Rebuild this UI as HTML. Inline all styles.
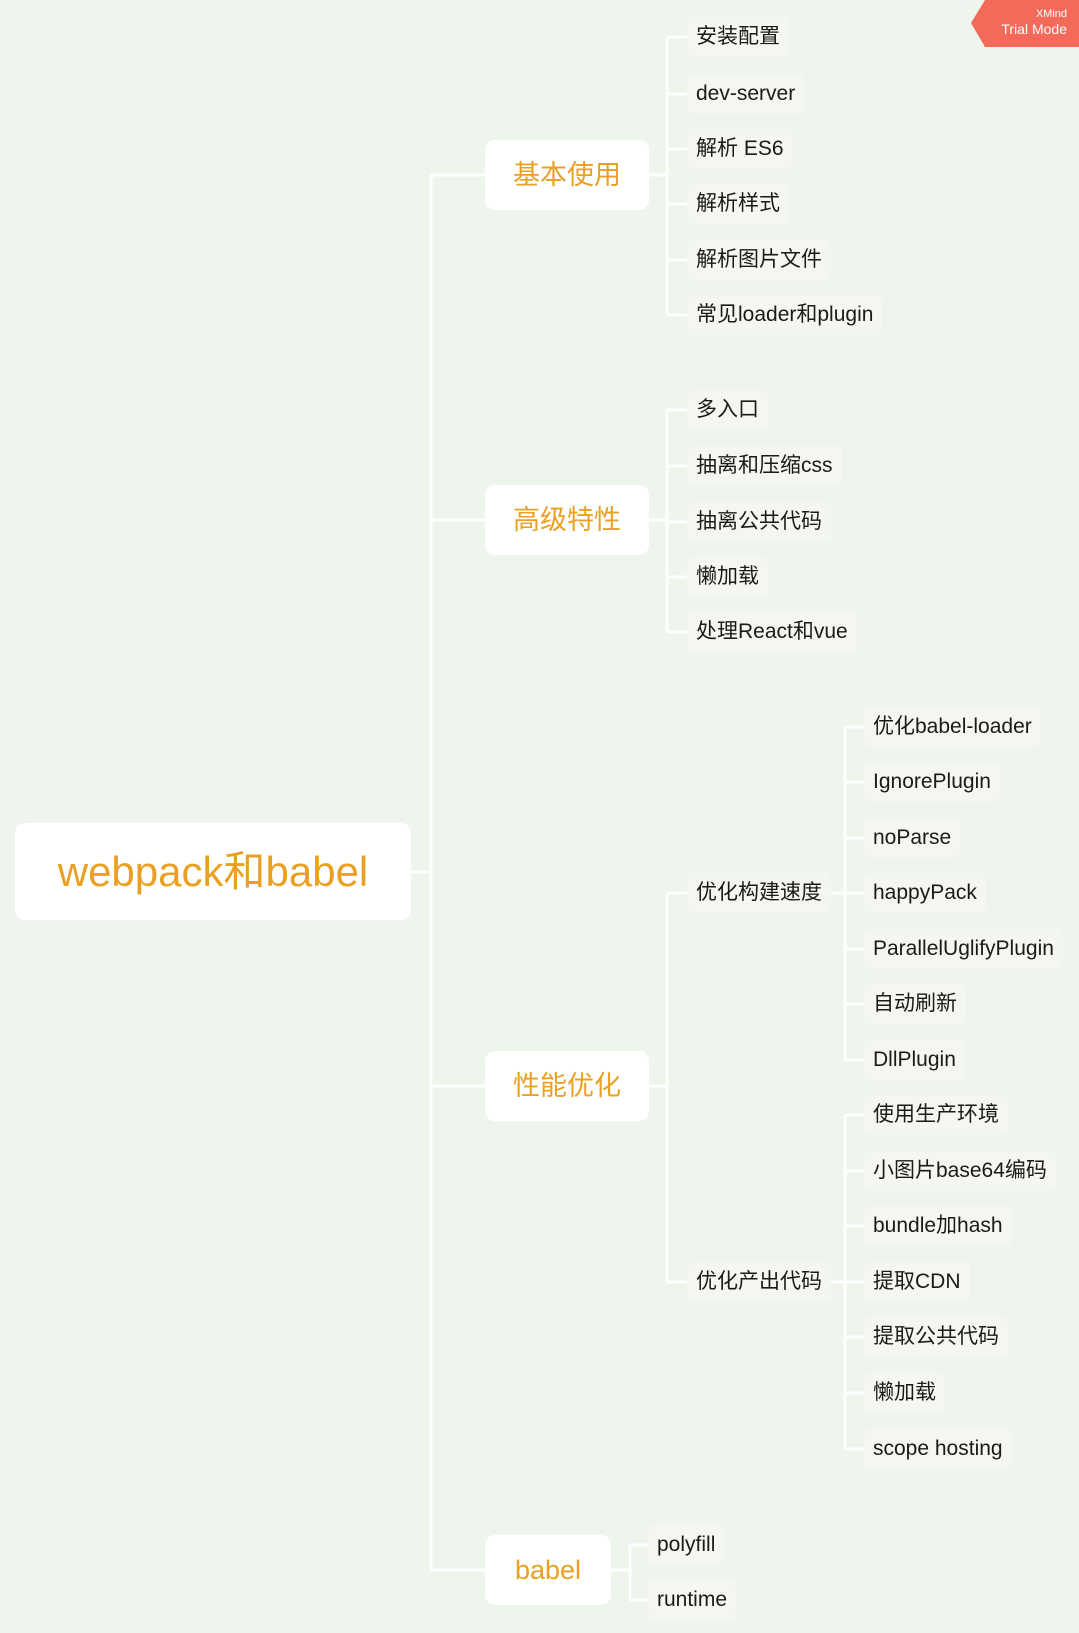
<!DOCTYPE html>
<html><head><meta charset="utf-8"><style>
body{margin:0;width:1079px;height:1633px;background:#eef5ec;position:relative;overflow:hidden;font-family:"Liberation Sans","Noto Sans CJK SC",sans-serif}
.n{position:absolute;height:40px;line-height:40px;padding:0 9px;background:#f4f7ef;border-radius:6px;font-size:21px;color:#1a1a1a;white-space:nowrap;margin-top:2px}
.l1{position:absolute;background:#fff;border-radius:10px;color:#e9a023;font-size:27px;text-align:center;height:70px;line-height:70px}
svg{position:absolute;left:0;top:0}
</style></head><body>
<svg width="1079" height="1633" fill="none" stroke="#fff" stroke-width="3">
<path d="M411 872H431M431 175V1570M431 175H485M431 520H485M431 1086H485M431 1570H485"/>
<path d="M649 175H667M667 37V315M667 37H687M667 94H687M667 149H687M667 204H687M667 260H687M667 315H687"/>
<path d="M649 520H667M667 410V632M667 410H687M667 466H687M667 522H687M667 577H687M667 632H687"/>
<path d="M649 1086H667M667 893V1282M667 893H687M667 1282H687"/>
<path d="M827 893H845M845 727V1060M845 727H864M845 782H864M845 838H864M845 893H864M845 949H864M845 1004H864M845 1060H864"/>
<path d="M827 1282H845M845 1115V1449M845 1115H864M845 1171H864M845 1226H864M845 1282H864M845 1337H864M845 1393H864M845 1449H864"/>
<path d="M611 1570H630M630 1545V1600M630 1545H648M630 1600H648"/>
</svg>
<div style="position:absolute;left:15px;top:823px;width:396px;height:97px;background:#fff;border-radius:10px;color:#e9a023;font-size:42px;line-height:97px;text-align:center">webpack和babel</div>
<div class="l1" style="left:485px;top:140px;width:164px">基本使用</div>
<div class="l1" style="left:485px;top:485px;width:164px">高级特性</div>
<div class="l1" style="left:485px;top:1051px;width:164px">性能优化</div>
<div class="l1" style="left:485px;top:1535px;width:126px">babel</div>

<div class="n" style="left:687px;top:15px">安装配置</div>
<div class="n" style="left:687px;top:72px">dev-server</div>
<div class="n" style="left:687px;top:127px">解析 ES6</div>
<div class="n" style="left:687px;top:182px">解析样式</div>
<div class="n" style="left:687px;top:238px">解析图片文件</div>
<div class="n" style="left:687px;top:293px">常见loader和plugin</div>

<div class="n" style="left:687px;top:388px">多入口</div>
<div class="n" style="left:687px;top:444px">抽离和压缩css</div>
<div class="n" style="left:687px;top:500px">抽离公共代码</div>
<div class="n" style="left:687px;top:555px">懒加载</div>
<div class="n" style="left:687px;top:610px">处理React和vue</div>

<div class="n" style="left:687px;top:871px">优化构建速度</div>
<div class="n" style="left:687px;top:1260px">优化产出代码</div>

<div class="n" style="left:864px;top:705px">优化babel-loader</div>
<div class="n" style="left:864px;top:760px">IgnorePlugin</div>
<div class="n" style="left:864px;top:816px">noParse</div>
<div class="n" style="left:864px;top:871px">happyPack</div>
<div class="n" style="left:864px;top:927px">ParallelUglifyPlugin</div>
<div class="n" style="left:864px;top:982px">自动刷新</div>
<div class="n" style="left:864px;top:1038px">DllPlugin</div>

<div class="n" style="left:864px;top:1093px">使用生产环境</div>
<div class="n" style="left:864px;top:1149px">小图片base64编码</div>
<div class="n" style="left:864px;top:1204px">bundle加hash</div>
<div class="n" style="left:864px;top:1260px">提取CDN</div>
<div class="n" style="left:864px;top:1315px">提取公共代码</div>
<div class="n" style="left:864px;top:1371px">懒加载</div>
<div class="n" style="left:864px;top:1427px">scope hosting</div>

<div class="n" style="left:648px;top:1523px">polyfill</div>
<div class="n" style="left:648px;top:1578px">runtime</div>

<svg width="1079" height="60" style="left:0;top:0"><polygon points="985,0 1079,0 1079,47 985,47 971,23" fill="#f3695a"/></svg>
<div style="position:absolute;right:12px;top:8px;color:#fff;font-size:11px;text-align:right;line-height:13px">XMind<br><span style="font-size:14px;line-height:17px">Trial Mode</span></div>
</body></html>
